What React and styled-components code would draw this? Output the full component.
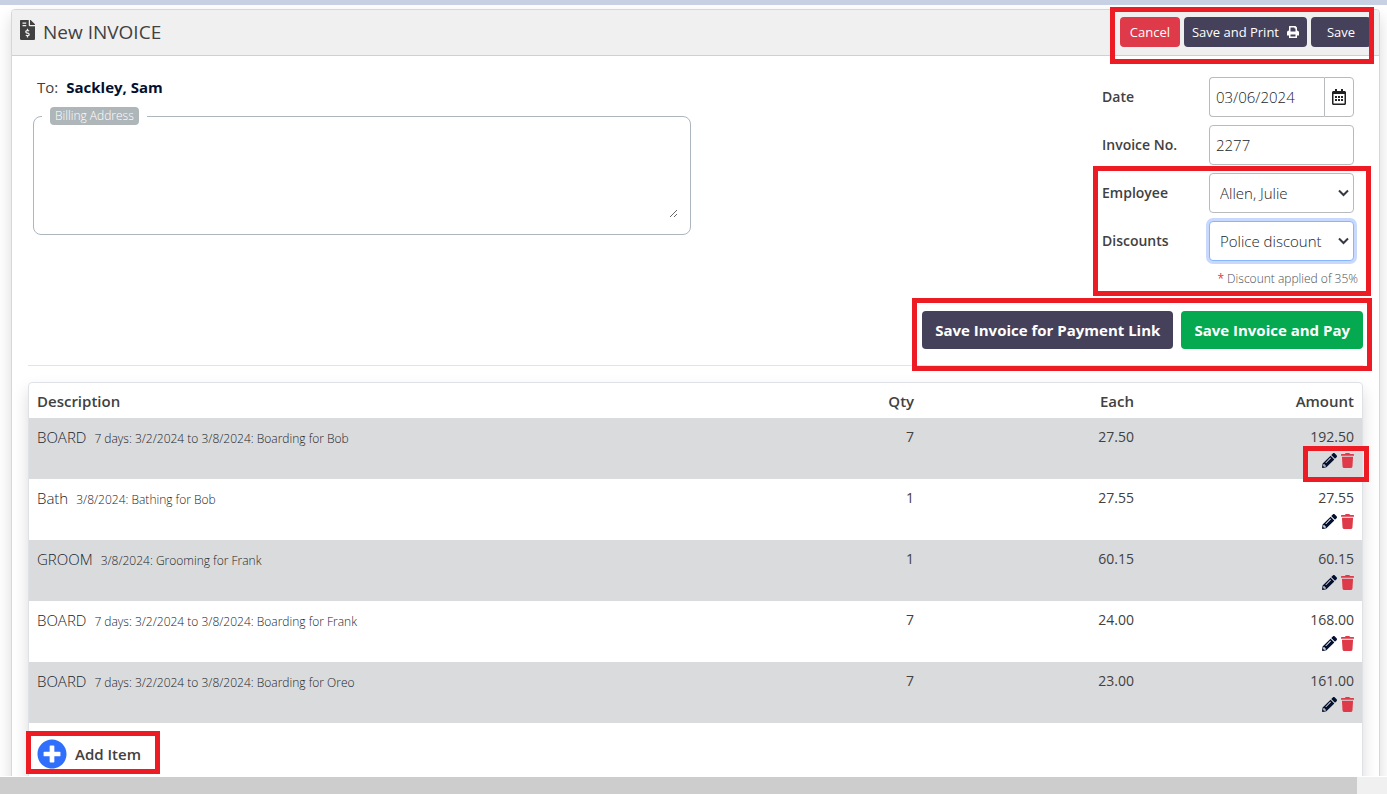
import React from 'react';
import styled, { createGlobalStyle, css } from 'styled-components';
import {
  FaFileInvoiceDollar,
  FaRegCalendarAlt,
  FaPencilAlt,
  FaTrash,
  FaPlusCircle,
} from 'react-icons/fa';

const GlobalStyle = createGlobalStyle`
  *, *::before, *::after { box-sizing: border-box; }
  body {
    margin: 0;
    background: #fff;
    color: #414141;
    font-family: "Open Sans", "Noto Sans", sans-serif;
    font-size: 15px;
    line-height: 24px;
  }
  button, input, select, textarea { font: inherit; color: inherit; }
`;

const Page = styled.div`
  height: 100vh;
  display: flex;
  flex-direction: column;
`;

const TopStrip = styled.div`
  flex: none;
  height: 5px;
  background: #c7d1e3;
`;

const Content = styled.main`
  flex: 1;
  min-height: 0;
  overflow: hidden;
  padding: 4px 7px 0 11px;
  border-bottom: 1px solid #fff;
`;

const Card = styled.section`
  min-height: 100vh;
  border: 1px solid #d6d7d8;
  border-radius: 4px;
  background: #fff;
  box-shadow: 0 8px 16px rgba(0, 0, 0, 0.15);
`;

const CardHeader = styled.header`
  display: flex;
  justify-content: space-between;
  align-items: center;
  padding: 7px 8px 8px;
  background: #f0f0f0;
  border-bottom: 1px solid #cfd0d1;
  border-radius: 3px 3px 0 0;
`;

const Title = styled.h1`
  display: flex;
  align-items: center;
  gap: 8px;
  margin: 0;
  font-size: 19px;
  font-weight: 500;
  svg { width: 15px; height: 20px; margin-bottom: 4px; }
`;

const Marked = styled.div`
  position: relative;
  &::after {
    content: "";
    position: absolute;
    inset: ${(p) => p.$inset};
    border: 5px solid #ed1c24;
    pointer-events: none;
    z-index: 2;
  }
`;

const HeaderActions = styled(Marked)`
  display: flex;
  gap: 4px;
`;

const tones = { dark: '#45415a', danger: '#de3a49', success: '#04a950' };

const Button = styled.button`
  display: inline-flex;
  align-items: center;
  justify-content: center;
  gap: 8px;
  border: 0;
  border-radius: 4px;
  padding: 0 8px;
  height: 30px;
  min-width: 60px;
  color: #fff;
  background: ${(p) => tones[p.$tone]};
  font-size: 13px;
  white-space: nowrap;
  cursor: pointer;
  svg { width: 12px; height: 12px; }
  ${(p) => p.$large && css`
    height: 38px;
    padding: 0 13px;
    font-size: 15px;
    font-weight: 700;
  `}
`;

const CardBody = styled.div`
  padding: 19px 16px 0;
`;

const Top = styled.div`
  display: flex;
  justify-content: space-between;
  padding: 0 9px 0 5px;
`;

const Customer = styled.div`
  width: 50%;
  max-width: 658px;
  flex: 1;
`;

const Recipient = styled.p`
  display: flex;
  gap: 8px;
  margin: 0 0 8px 4px;
  strong { color: #04102f; font-weight: 700; font-size: 15px; }
`;

const Address = styled.fieldset`
  margin: 0;
  padding: 0 12px 16px 8px;
  border: 1px solid #adb5bd;
  border-radius: 8px;
  min-width: 0;
`;

const Legend = styled.legend`
  padding: 0 8px;
  line-height: 18px;
  label {
    display: block;
    padding: 0 5px;
    border-radius: 4px;
    background: #aeb6b9;
    color: #fff;
    font-size: 12px;
    font-weight: 300;
    line-height: 18px;
  }
`;

const AddressInput = styled.textarea`
  display: block;
  width: 100%;
  height: 93px;
  border: 0;
  outline: 0;
  padding: 4px 8px;
  background: transparent;
  resize: vertical;
`;

const Fields = styled.div`
  display: flex;
  flex-direction: column;
  gap: 8px;
  width: 252px;
  padding-top: 2px;
`;

const Field = styled.div`
  display: grid;
  grid-template-columns: 107px 1fr;
  align-items: center;
  label { font-weight: 600; font-size: 14px; }
`;

const control = css`
  width: 100%;
  height: 40px;
  min-width: 0;
  border: 1px solid #b9babb;
  border-radius: 4px;
  background: #fff;
  color: #212529;
  font-size: 15px;
  font-weight: 300;
  outline: 0;
`;

const TextInput = styled.input`
  ${control}
  padding: 0 6px;
`;

const DateGroup = styled.div`
  display: flex;
  ${TextInput} { border-radius: 4px 0 0 4px; border-right: 0; }
`;

const DateButton = styled.button`
  flex: none;
  display: grid;
  place-items: center;
  width: 30px;
  padding: 0;
  border: 1px solid #b9babb;
  border-radius: 0 4px 4px 0;
  background: #fff;
  color: #212121;
  svg { width: 14px; height: 16px; }
`;

const SelectWrap = styled.div`
  position: relative;
  svg {
    position: absolute;
    right: 5px;
    top: 16px;
    width: 11px;
    height: 8px;
    pointer-events: none;
  }
`;

const Select = styled.select`
  ${control}
  appearance: none;
  padding: 0 20px 0 10px;
  ${(p) => p.$active && css`
    border-color: #86b7fe;
    box-shadow: 0 0 0 3px #c9d9fd;
  `}
`;

const MarkedFields = styled(Marked)`
  display: flex;
  flex-direction: column;
  gap: 8px;
`;

const Note = styled.p`
  margin: 0 -4px 0 0;
  text-align: right;
  white-space: nowrap;
  font-size: 12px;
  font-weight: 300;
  line-height: 20px;
  color: #495057;
  span { color: #de3a49; font-weight: 400; }
`;

const PayRow = styled.div`
  display: flex;
  justify-content: flex-end;
  padding: 22px 0 16px;
  border-bottom: 1px solid #e2e3e4;
`;

const PayActions = styled(Marked)`
  display: flex;
  gap: 8px;
`;

const Items = styled.section`
  margin-top: 16px;
  min-height: 100vh;
  border: 1px solid #dee2e6;
  border-radius: 4px;
  box-shadow: 0 8px 16px rgba(0, 0, 0, 0.15);
`;

const Table = styled.table`
  width: 100%;
  table-layout: fixed;
  border-collapse: collapse;
`;

const Th = styled.th`
  width: ${(p) => p.$width};
  padding: 6px 8px 5px;
  text-align: ${(p) => (p.$right ? 'right' : 'left')};
  font-weight: 600;
`;

const Tr = styled.tr`
  height: 61px;
  &:nth-child(odd) { background: #dadbdd; }
`;

const Td = styled.td`
  padding: 7px 8px 0;
  vertical-align: top;
  color: #212529;
  font-weight: 300;
  text-align: left;
  small { margin-left: 8px; font-size: 12px; }
  ${(p) => p.$right && css`
    color: #414141;
    font-size: 14px;
    font-weight: 400;
    text-align: right;
  `}
`;

const RowActions = styled.div`
  display: flex;
  justify-content: flex-end;
  margin-top: 4px;
`;

const rowMark = css`
  position: relative;
  &::after {
    content: "";
    position: absolute;
    inset: -7px -15px -14px -19px;
    border: 5px solid #ed1c24;
    pointer-events: none;
  }
`;

const ActionPair = styled.div`
  display: flex;
  gap: 4px;
  ${(p) => p.$marked && rowMark}
`;

const IconButton = styled.button`
  display: block;
  padding: 0;
  border: 0;
  background: none;
  line-height: 0;
  color: ${(p) => (p.$danger ? '#de3a49' : '#04102f')};
  cursor: pointer;
  svg { display: block; width: ${(p) => (p.$danger ? '13px' : '15px')}; height: 15px; }
`;

const AddRow = styled.div`
  display: flex;
  padding: 16px 8px;
`;

const AddButton = styled.button`
  display: flex;
  align-items: center;
  gap: 8px;
  padding: 0;
  border: 0;
  background: none;
  font-weight: 600;
  cursor: pointer;
  svg { width: 30px; height: 30px; color: #2f6ffb; }
`;

const ScrollTrack = styled.div`
  flex: none;
  height: 17px;
  padding-right: 30px;
  background: #f0f0f0;
`;

const ScrollThumb = styled.div`
  height: 100%;
  background: #cdcdcd;
`;

const Chevron = () => (
  <svg viewBox="0 0 11 8" aria-hidden="true">
    <path d="M1 1.5 5.5 6 10 1.5" fill="none" stroke="#343a40" strokeWidth="2" />
  </svg>
);

const Printer = () => (
  <svg viewBox="0 0 12 12" fill="currentColor" aria-hidden="true">
    <path
      fillRule="evenodd"
      d="M2.5 0h6L10 1.5v3c1.1 0 2 .8 2 1.900V9.500h-2V12H2V9.500H0V6.400c0-1.100.9-1.900 2-1.900V.5c0-.3.2-.5.5-.5ZM3.500 1.500v4h5V2.500h-1v-1ZM3.500 8.500v2h5v-2Z"
    />
  </svg>
);

const items = [
  ['BOARD', '7 days: 3/2/2024 to 3/8/2024: Boarding for Bob', '7', '27.50', '192.50'],
  ['Bath', '3/8/2024: Bathing for Bob', '1', '27.55', '27.55'],
  ['GROOM', '3/8/2024: Grooming for Frank', '1', '60.15', '60.15'],
  ['BOARD', '7 days: 3/2/2024 to 3/8/2024: Boarding for Frank', '7', '24.00', '168.00'],
  ['BOARD', '7 days: 3/2/2024 to 3/8/2024: Boarding for Oreo', '7', '23.00', '161.00'],
];

export default function App() {
  return (
    <Page>
      <GlobalStyle />
      <TopStrip />
      <Content>
        <Card>
          <CardHeader>
            <Title><FaFileInvoiceDollar />New INVOICE</Title>
            <HeaderActions $inset="-10px -3px -17px -10px">
              <Button $tone="danger">Cancel</Button>
              <Button $tone="dark">Save and Print <Printer /></Button>
              <Button $tone="dark">Save</Button>
            </HeaderActions>
          </CardHeader>
          <CardBody>
            <Top>
              <Customer>
                <Recipient>To: <strong>Sackley, Sam</strong></Recipient>
                <Address>
                  <Legend><label htmlFor="address">Billing Address</label></Legend>
                  <AddressInput id="address" />
                </Address>
              </Customer>
              <Fields>
                <Field>
                  <label htmlFor="date">Date</label>
                  <DateGroup>
                    <TextInput id="date" defaultValue="03/06/2024" />
                    <DateButton aria-label="Choose date"><FaRegCalendarAlt /></DateButton>
                  </DateGroup>
                </Field>
                <Field>
                  <label htmlFor="number">Invoice No.</label>
                  <TextInput id="number" defaultValue="2277" />
                </Field>
                <MarkedFields $inset="-7px -17px -7px -9px">
                  <Field>
                    <label htmlFor="employee">Employee</label>
                    <SelectWrap>
                      <Select id="employee"><option>Allen, Julie</option></Select>
                      <Chevron />
                    </SelectWrap>
                  </Field>
                  <Field>
                    <label htmlFor="discount">Discounts</label>
                    <SelectWrap>
                      <Select id="discount" $active><option>Police discount</option></Select>
                      <Chevron />
                    </SelectWrap>
                  </Field>
                  <Note><span>*</span> Discount applied of 35%</Note>
                </MarkedFields>
              </Fields>
            </Top>
            <PayRow>
              <PayActions $inset="-13px -9px -22px -10px">
                <Button $tone="dark" $large>Save Invoice for Payment Link</Button>
                <Button $tone="success" $large>Save Invoice and Pay</Button>
              </PayActions>
            </PayRow>
            <Items>
              <Table>
                <thead>
                  <tr>
                    <Th>Description</Th>
                    <Th $right $width="16.5%">Qty</Th>
                    <Th $right $width="16.5%">Each</Th>
                    <Th $right $width="16.5%">Amount</Th>
                  </tr>
                </thead>
                <tbody>
                  {items.map(([name, detail, qty, each, amount], i) => (
                    <Tr key={i}>
                      <Td>{name}<small>{detail}</small></Td>
                      <Td $right>{qty}</Td>
                      <Td $right>{each}</Td>
                      <Td $right>
                        {amount}
                        <RowActions>
                          <ActionPair $marked={i === 0}>
                            <IconButton aria-label="Edit"><FaPencilAlt /></IconButton>
                            <IconButton aria-label="Delete" $danger><FaTrash /></IconButton>
                          </ActionPair>
                        </RowActions>
                      </Td>
                    </Tr>
                  ))}
                </tbody>
              </Table>
              <AddRow>
                <Marked $inset="-8px -19px -5px -11px">
                  <AddButton><FaPlusCircle />Add Item</AddButton>
                </Marked>
              </AddRow>
            </Items>
          </CardBody>
        </Card>
      </Content>
      <ScrollTrack><ScrollThumb /></ScrollTrack>
    </Page>
  );
}
